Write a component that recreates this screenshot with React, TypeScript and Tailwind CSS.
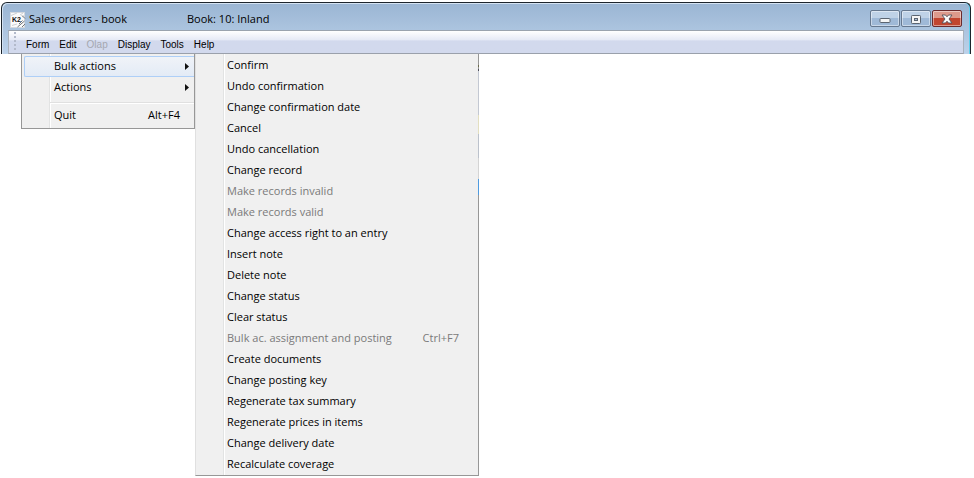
import React from "react";

type Entry = { label: string; shortcut?: string; disabled?: boolean };

const bulkActions: Entry[] = [
  { label: "Confirm" },
  { label: "Undo confirmation" },
  { label: "Change confirmation date" },
  { label: "Cancel" },
  { label: "Undo cancellation" },
  { label: "Change record" },
  { label: "Make records invalid", disabled: true },
  { label: "Make records valid", disabled: true },
  { label: "Change access right to an entry" },
  { label: "Insert note" },
  { label: "Delete note" },
  { label: "Change status" },
  { label: "Clear status" },
  { label: "Bulk ac. assignment and posting", shortcut: "Ctrl+F7", disabled: true },
  { label: "Create documents" },
  { label: "Change posting key" },
  { label: "Regenerate tax summary" },
  { label: "Regenerate prices in items" },
  { label: "Change delivery date" },
  { label: "Recalculate coverage" },
];

const menus: Entry[] = [
  { label: "Form" },
  { label: "Edit" },
  { label: "Olap", disabled: true },
  { label: "Display" },
  { label: "Tools" },
  { label: "Help" },
];

function AppIcon() {
  return (
    <svg width="16" height="16" viewBox="0 0 16 16" aria-hidden="true">
      <rect x="0.5" y="0.5" width="14" height="15" fill="#fbfbfb" stroke="#d4d8de" />
      <path d="M1 3.5 7 1M2 13.500 7 12M13 1 10 3M14 3.500 12 5" stroke="#c2c5ca" strokeWidth="0.8" fill="none" />
      <path d="M12 3.500 15 6.500M12.500 8.500 9 12M14.500 9 7.500 15M15 12 12 15" stroke="#63666c" strokeWidth="0.9" fill="none" />
      <text x="2" y="10" fontSize="7" fontWeight="bold" fill="#111" fontFamily="Liberation Sans, Arial, sans-serif">
        K2
      </text>
    </svg>
  );
}

function Arrow() {
  return (
    <svg width="4" height="7" viewBox="0 0 4 7" aria-hidden="true">
      <path d="M0 0 4 3.5 0 7Z" fill="#111" />
    </svg>
  );
}

function WindowButtons() {
  const base = "flex h-[17px] w-[30px] items-center justify-center rounded-[2px] border shadow-[inset_0_0_0_1px_rgba(255,255,255,0.45)]";
  const blue = "border-[#66788f] bg-linear-to-b from-[#bfd2e7] from-50% to-[#9fb9d7] to-50%";
  return (
    <div className="flex gap-px">
      <button aria-label="Minimize" className={`${base} ${blue}`}>
        <svg width="12" height="12" viewBox="0 0 12 12">
          <rect x="1" y="5.5" width="10" height="4" rx="0.8" fill="#f5f5f5" stroke="#5b6470" />
        </svg>
      </button>
      <button aria-label="Maximize" className={`${base} ${blue}`}>
        <svg width="12" height="12" viewBox="0 0 12 12">
          <rect x="1.500" y="2.500" width="9" height="8" rx="0.8" fill="#f5f5f5" stroke="#5b6470" />
          <rect x="4.500" y="5.500" width="3" height="2" fill="#a9bdd6" stroke="#5b6470" />
        </svg>
      </button>
      <button
        aria-label="Close"
        className={`${base} border-[#6b2a2c] bg-linear-to-b from-[#dd9a8c] from-50% to-[#c1452f] to-50%`}
      >
        <svg width="12" height="12" viewBox="0 0 12 12">
          <path d="M1 2h3.500L6 3.800 7.500 2H11L8 6l3 4H7.500L6 8.200 4.500 10H1l3-4Z" fill="#fafafa" stroke="#53505a" strokeWidth="0.9" />
        </svg>
      </button>
    </div>
  );
}

export default function App() {
  return (
    <div className="bg-white pt-[2px] font-['Open_Sans','Noto_Sans',sans-serif] text-[11px] text-black">
      <header className="mr-[3px] ml-px rounded-t-[6px] border border-b-0 border-[#1c242c] bg-linear-to-b from-[#9ab5d3] to-[#bcd2ea] px-[6px] shadow-[inset_-1px_0_0_#5fd0ee,inset_1px_1px_0_#d3e2f2]">
        <div className="flex h-[27px] items-center pt-[6px] pr-[2px] pl-[2px]">
          <AppIcon />
          <h1 className="ml-[3px] w-[158px]">Sales orders - book</h1>
          <p>Book: 10: Inland</p>
          <div className="mb-[2px] ml-auto">
            <WindowButtons />
          </div>
        </div>
        <nav className="flex h-[24px] items-center border border-b-[#9aa0ab] border-t-[#9aa3ae] border-x-[#a9b2bd] bg-linear-to-b from-white via-[#e6eaf6] via-40% to-[#d2d9ed] to-45% pl-[5px]">
          <div className="mr-[10px] h-[20px] w-[2px] bg-[repeating-linear-gradient(to_bottom,#b3bacb_0_2px,transparent_2px_4px)]" />
          <ul className="flex gap-[10px] pt-[4px] font-['Liberation_Sans',Arial,sans-serif] text-[10px]">
            {menus.map((m) => (
              <li key={m.label}>
                <button disabled={m.disabled} className="block disabled:text-[#a5a8b0]">
                  {m.label}
                </button>
              </li>
            ))}
          </ul>
        </nav>
      </header>
      <div className="ml-[21px] flex items-start">
        <ul className="w-[174px] border border-t-0 border-[#979797] bg-[linear-gradient(to_right,#f0f0f0_27px,#e2e3e3_27px,#e2e3e3_28px,#fff_28px,#fff_29px,#f0f0f0_29px)] py-[2px] pl-[2px]">
          <li>
            <button className="flex h-[21px] w-full items-center justify-between rounded-l-[2px] border border-r-0 border-[#aecff7] bg-linear-to-b from-[#f0f3f8] to-[#e3ebf6] pr-[5px] pl-[29px]">
              Bulk actions
              <Arrow />
            </button>
          </li>
          <li>
            <button className="flex h-[21px] w-full items-center justify-between pr-[5px] pl-[30px]">
              Actions
              <Arrow />
            </button>
          </li>
          <li role="separator" className="mt-[4px] ml-[26px] h-[2px] border-t border-b border-t-[#e0e0e0] border-b-white" />
          <li>
            <button className="flex h-[22px] w-full items-center justify-between pr-[14px] pl-[30px]">
              Quit
              <span>Alt+F4</span>
            </button>
          </li>
        </ul>
        <ul className="w-[284px] border border-t-0 border-r-[#979797] border-b-[#979797] border-l-[#e0e0e0] bg-[linear-gradient(to_right,#f0f0f0_27px,#e2e3e3_27px,#e2e3e3_28px,#fff_28px,#fff_29px,#f0f0f0_29px)] pt-px">
          {bulkActions.map((a) => (
            <li key={a.label}>
              <button
                disabled={a.disabled}
                className="flex h-[21px] w-full items-center justify-between pr-[19px] pl-[31px] disabled:text-[#7a7a7a]"
              >
                {a.label}
                {a.shortcut && <span>{a.shortcut}</span>}
              </button>
            </li>
          ))}
        </ul>
        <div className="-ml-px w-px pt-[11px]" aria-hidden="true">
          <div className="h-[2px] bg-[#6b6b4a]" />
          <div className="mt-[2px] h-[2px] bg-[#4d4d5a]" />
          <div className="h-[44px] bg-[#c3c8d2]" />
          <div className="h-[19px] bg-[#e3dfc0]" />
          <div className="h-[24px] bg-[#bcc2cc]" />
          <div className="h-[21px] bg-[#d4d4d4]" />
          <div className="h-[16px] bg-[#4f9be0]" />
        </div>
      </div>
    </div>
  );
}
